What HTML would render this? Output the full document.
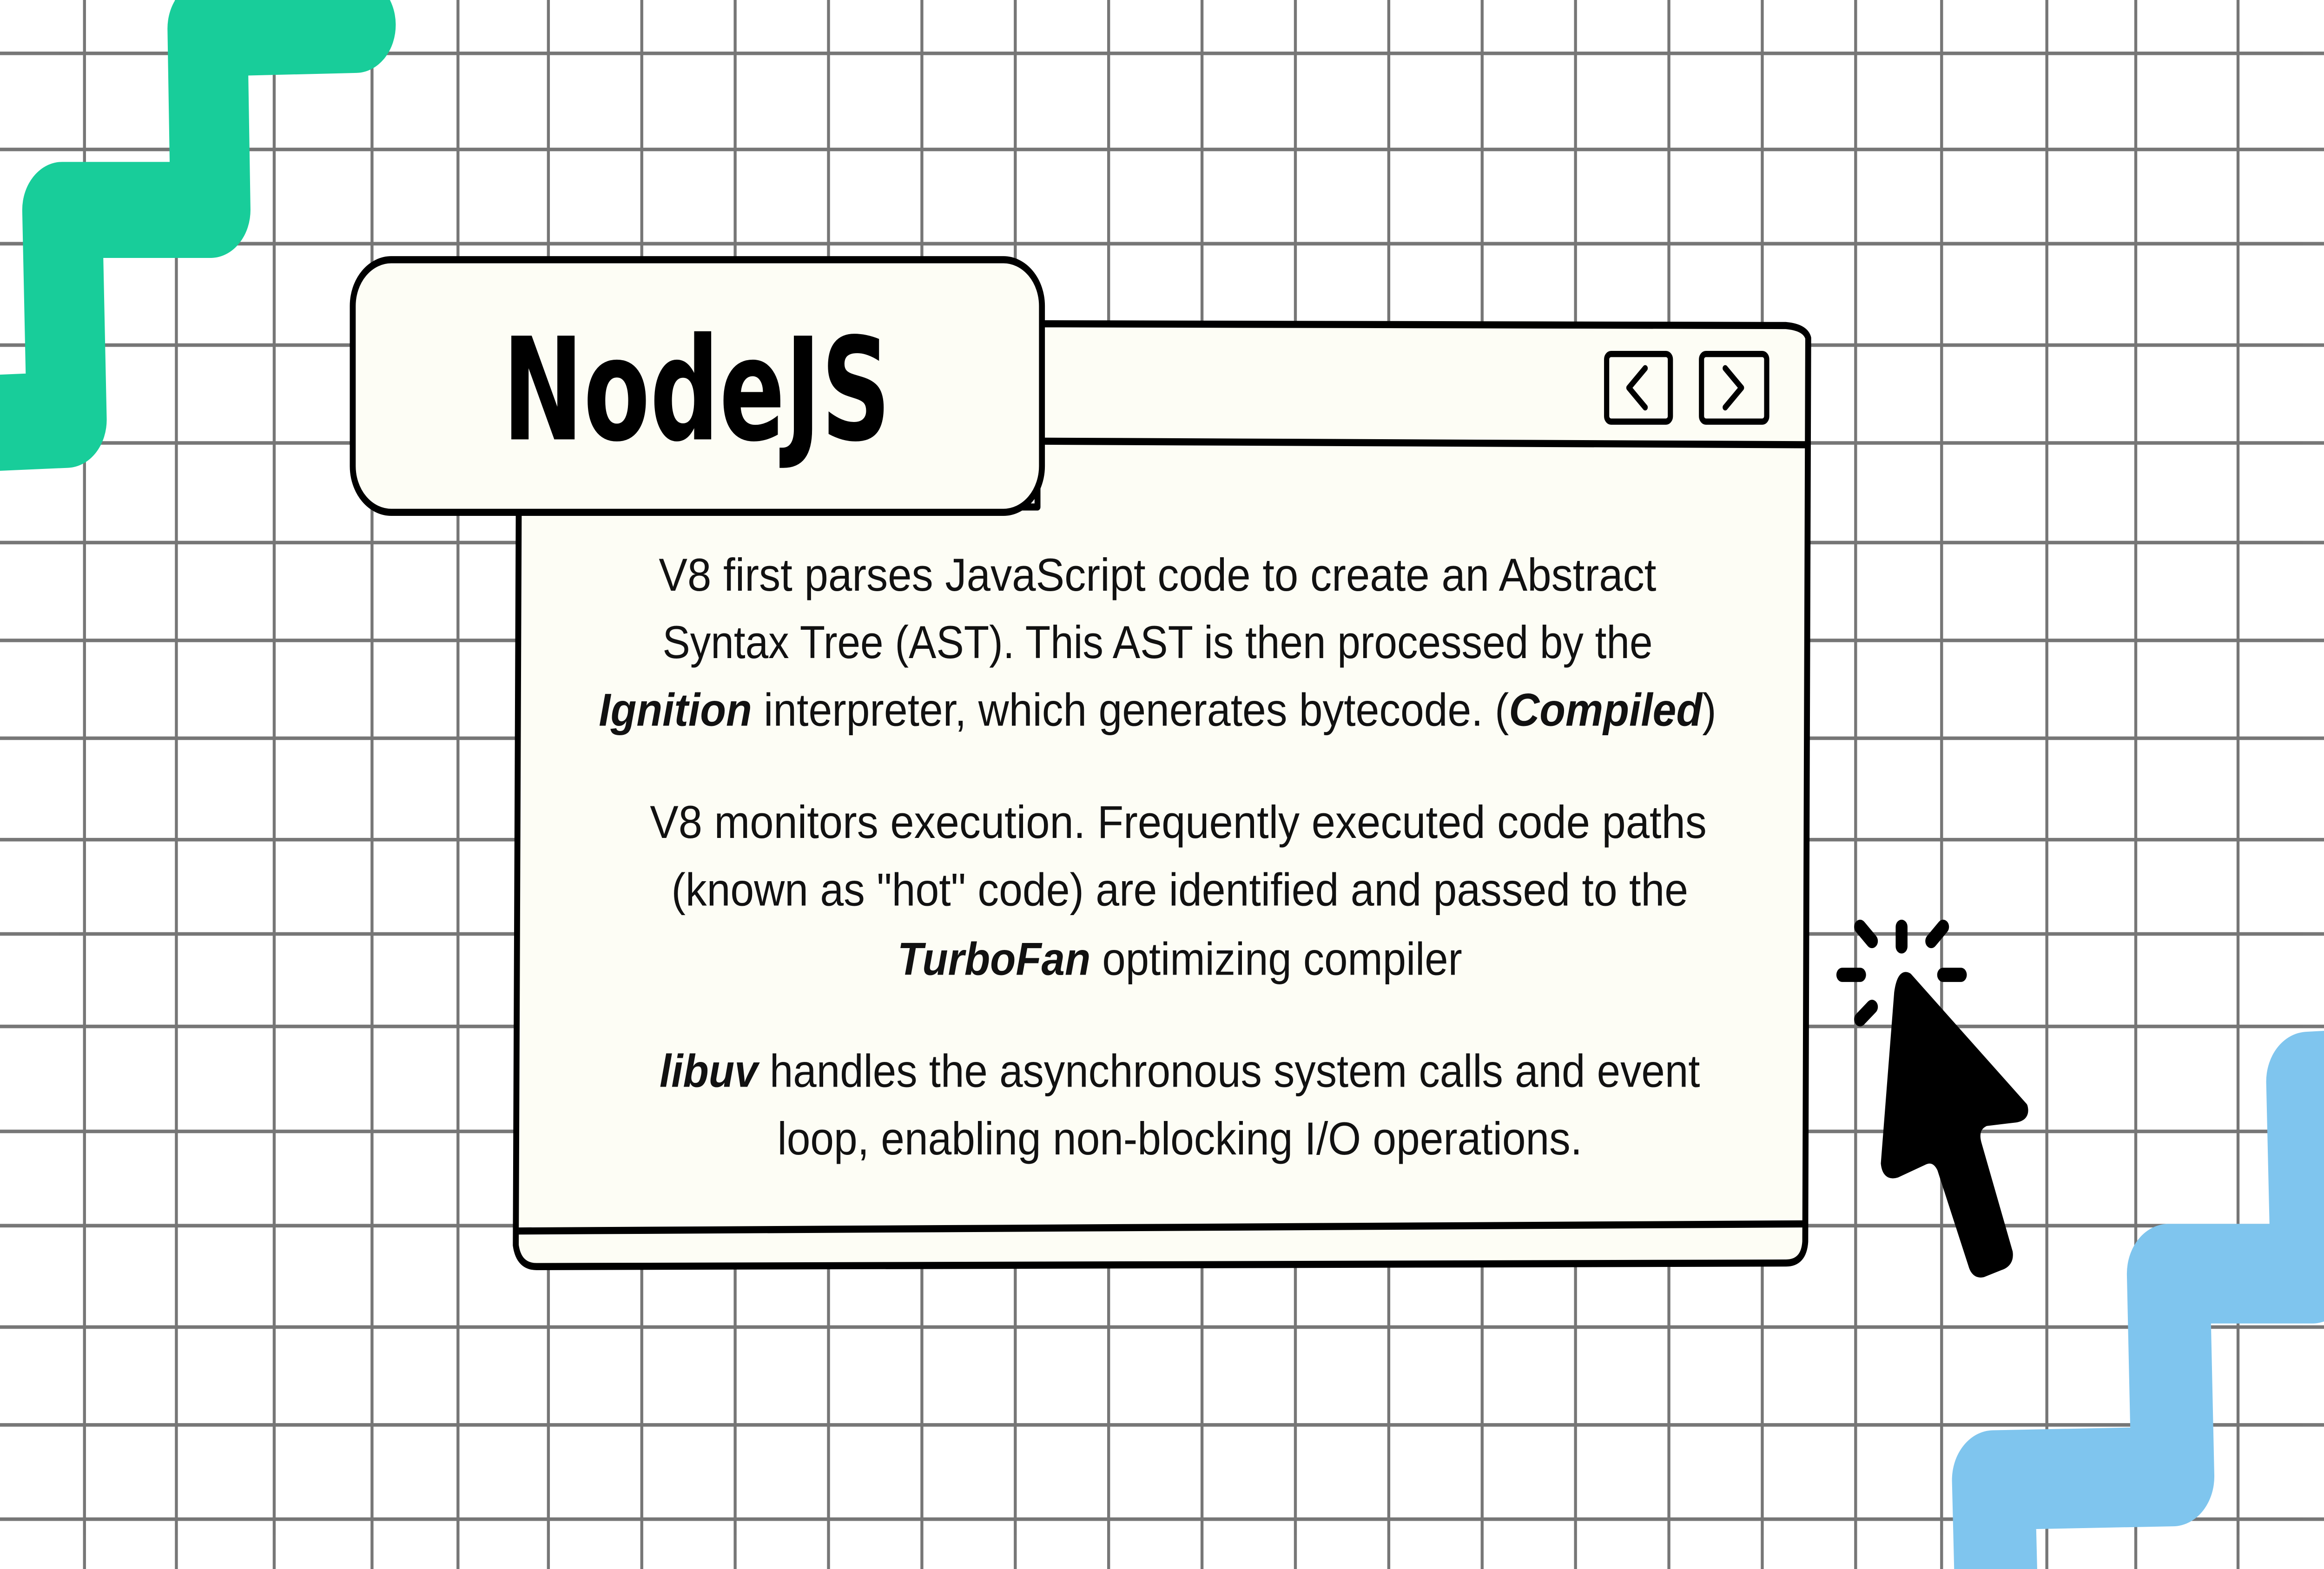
<!DOCTYPE html>
<html><head><meta charset="utf-8"><style>
html,body{margin:0;padding:0;background:#fff;width:100%;height:100%;overflow:hidden;}
svg{display:block;position:fixed;left:0;top:0;width:100vw;height:100vh;}
</style></head><body>
<svg viewBox="0 0 1568 882" preserveAspectRatio="none" xmlns="http://www.w3.org/2000/svg">
<rect width="1568" height="882" fill="#ffffff"/>
<g stroke="#555" stroke-width="2" opacity="0.8" fill="none">
<path d="M57 0V882M119 0V882M185 0V882M251 0V882M309 0V882M370 0V882M433 0V882M496 0V882M559 0V882M622 0V882M685 0V882M748 0V882M811 0V882M874 0V882M937 0V882M1000 0V882M1063 0V882M1126 0V882M1189 0V882M1252 0V882M1310 0V882M1381 0V882M1441 0V882M1510 0V882"/>
<path d="M0 30H1568M0 84H1568M0 137H1568M0 194H1568M0 249H1568M0 305H1568M0 360H1568M0 415H1568M0 472H1568M0 525H1568M0 577H1568M0 636H1568M0 689H1568M0 746H1568M0 801H1568M0 854H1568"/>
</g>
<path d="M240 14 L140 16 L142 118 L42 118 L45 236 L-10 238" fill="none" stroke="#18cd9a" stroke-width="54" stroke-linejoin="round" stroke-linecap="round"/>
<path d="M1600 606 L1557 608 L1560 716 L1463 716 L1466 830 L1345 832 L1347 900" fill="none" stroke="#7fc5ee" stroke-width="56" stroke-linejoin="round" stroke-linecap="round"/>
<path d="M350 285 L348 700 Q350 712 362 712 L1205 710 Q1217 710 1218 698 L1220 190 Q1218 184 1205 183 L700 182 L700 285 Z" fill="#fdfdf5" stroke="#000" stroke-width="4" stroke-linejoin="round"/>
<path d="M702 248 L1220 250" stroke="#000" stroke-width="4"/>
<path d="M350 692 L1218 688" stroke="#000" stroke-width="4"/>
<rect x="238" y="146" width="465" height="142" rx="26" fill="#fdfdf5" stroke="#000" stroke-width="4"/>
<text x="470" y="247" font-family="DejaVu Sans, Liberation Sans, sans-serif" font-weight="bold" font-size="80" text-anchor="middle" textLength="262" lengthAdjust="spacingAndGlyphs">NodeJS</text>
<rect x="1084" y="199" width="43" height="38" rx="3" fill="none" stroke="#000" stroke-width="3.5"/>
<rect x="1148" y="199" width="44" height="38" rx="3" fill="none" stroke="#000" stroke-width="3.5"/>
<path d="M1110 207 L1099 218 L1110 229" fill="none" stroke="#000" stroke-width="3.5" stroke-linecap="round" stroke-linejoin="round"/>
<path d="M1164 207 L1175 218 L1164 229" fill="none" stroke="#000" stroke-width="3.5" stroke-linecap="round" stroke-linejoin="round"/>
<g font-family="Liberation Sans, sans-serif" font-size="26" fill="#111" text-anchor="middle">
<text x="781" y="332" textLength="673" lengthAdjust="spacingAndGlyphs">V8 first parses JavaScript code to create an Abstract</text>
<text x="781" y="370" textLength="668" lengthAdjust="spacingAndGlyphs">Syntax Tree (AST). This AST is then processed by the</text>
<text x="781" y="408" textLength="754" lengthAdjust="spacingAndGlyphs"><tspan font-weight="bold" font-style="italic">Ignition</tspan> interpreter, which generates bytecode. (<tspan font-weight="bold" font-style="italic">Compiled</tspan>)</text>
<text x="795" y="471" textLength="713" lengthAdjust="spacingAndGlyphs">V8 monitors execution. Frequently executed code paths</text>
<text x="796" y="509" textLength="686" lengthAdjust="spacingAndGlyphs">(known as "hot" code) are identified and passed to the</text>
<text x="796" y="548" textLength="381" lengthAdjust="spacingAndGlyphs"><tspan font-weight="bold" font-style="italic">TurboFan</tspan> optimizing compiler</text>
<text x="796" y="611" textLength="702" lengthAdjust="spacingAndGlyphs"><tspan font-weight="bold" font-style="italic">libuv</tspan> handles the asynchronous system calls and event</text>
<text x="796" y="649" textLength="543" lengthAdjust="spacingAndGlyphs">loop, enabling non-blocking I/O operations.</text>
</g>
<path d="M1288 549 L1366 622 Q1368 628 1360 629 L1340 631 Q1332 634 1335 643 L1356 704 Q1357 710 1350 712 L1338 716 Q1332 717 1330 711 L1309 657 Q1305 650 1298 653 L1280 660 Q1272 662 1271 654 L1280 558 Q1282 546 1288 549 Z" fill="#000" stroke="#000" stroke-width="4" stroke-linejoin="round"/>
<g stroke="#000" stroke-width="8" stroke-linecap="round">
<path d="M1283 521 V532"/>
<path d="M1243 548 H1255"/>
<path d="M1311 548 H1323"/>
<path d="M1255 521 L1263 529"/>
<path d="M1303 529 L1311 521"/>
<path d="M1255 573 L1263 566"/>
</g>
</svg>
</body></html>
